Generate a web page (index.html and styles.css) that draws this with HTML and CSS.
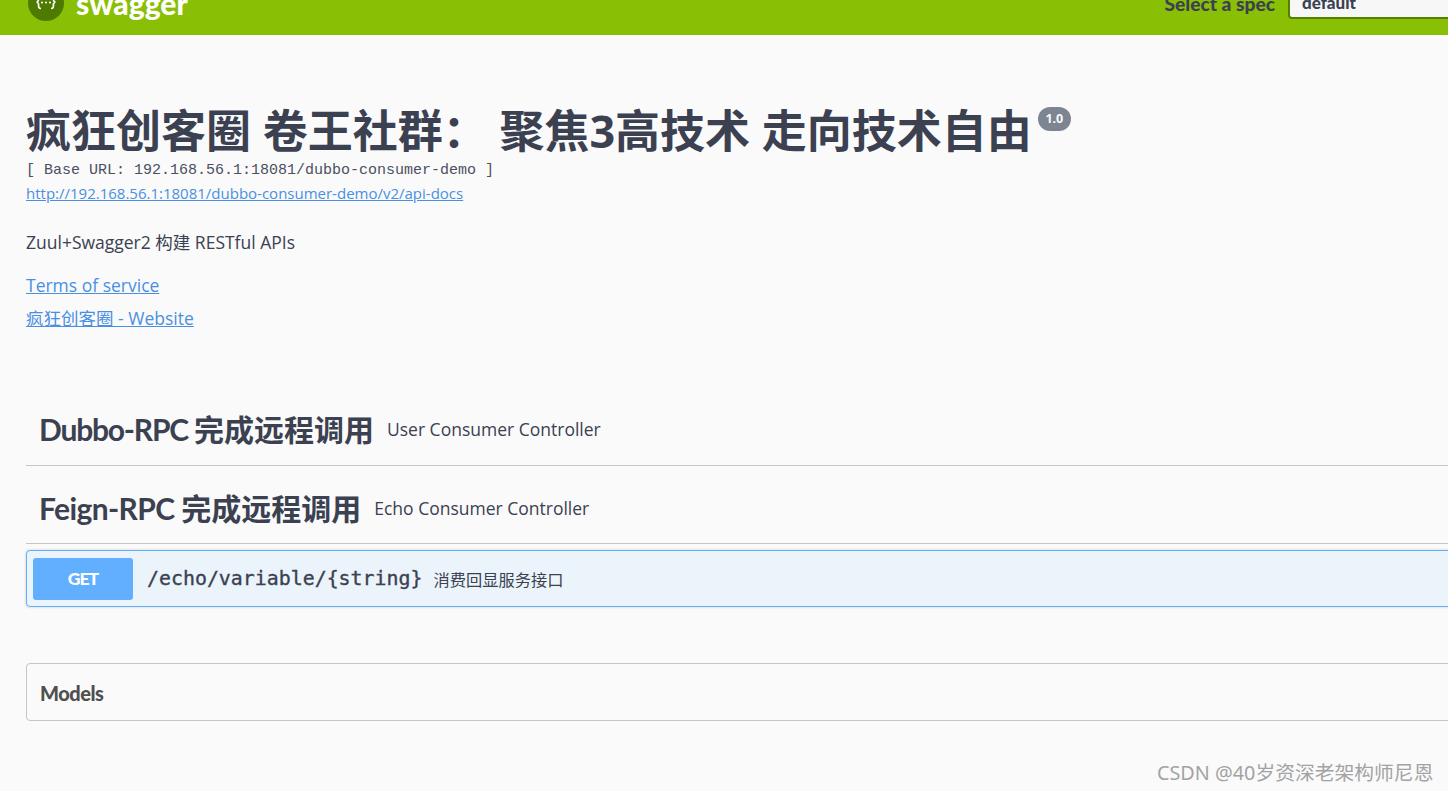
FILE: index.html
```html
<!DOCTYPE html>
<html lang="zh-CN">
<head>
<meta charset="utf-8">
<title>Swagger UI</title>
<link rel="stylesheet" href="styles.css">
</head>
<body>
<div class="page">
  <header class="topbar">
    <div class="brand">
      <svg class="logo" width="36" height="36" viewBox="0 0 36 36" aria-hidden="true">
        <circle cx="18" cy="18" r="18" fill="#4f7a02"/>
        <path d="M13 10.5c-2.6 0-2.4 1.6-2.4 3.4 0 1.7-.5 2.9-2 3.1 1.5.2 2 1.4 2 3.1 0 1.8-.2 3.4 2.4 3.4M23 10.5c2.6 0 2.4 1.6 2.4 3.4 0 1.7.5 2.9 2 3.1-1.5.2-2 1.4-2 3.1 0 1.8.2 3.4-2.4 3.4" fill="none" stroke="#fff" stroke-width="1.7"/>
        <circle cx="14" cy="17.5" r="1.1" fill="#fff"/>
        <circle cx="18" cy="17.5" r="1.1" fill="#fff"/>
        <circle cx="22" cy="17.5" r="1.1" fill="#fff"/>
      </svg>
      <span class="brand-name">swagger</span>
    </div>
    <div class="spec">
      <span class="spec-label">Select a spec</span>
      <div class="spec-select">default</div>
    </div>
  </header>

  <main class="content">
    <section class="info">
      <h1 class="title">疯狂创客圈 卷王社群： 聚焦3高技术 走向技术自由<span class="version">1.0</span></h1>
      <div class="base-url">[ Base URL: 192.168.56.1:18081/dubbo-consumer-demo ]</div>
      <a class="doc-link" href="#">http://192.168.56.1:18081/dubbo-consumer-demo/v2/api-docs</a>
      <p class="desc">Zuul+Swagger2 构建 RESTful APIs</p>
      <a class="info-link terms" href="#">Terms of service</a>
      <a class="info-link" href="#">疯狂创客圈 - Website</a>
    </section>

    <section class="tag first">
      <h2 class="tag-name"><span class="latin-wide">Dubbo-RPC </span>完成远程调用</h2>
      <span class="tag-desc">User Consumer Controller</span>
    </section>
    <section class="tag">
      <h2 class="tag-name"><span class="latin-narrow">Feign-RPC </span>完成远程调用</h2>
      <span class="tag-desc">Echo Consumer Controller</span>
    </section>

    <div class="op">
      <span class="method">GET</span>
      <span class="path">/echo/variable/{string}</span>
      <span class="summary">消费回显服务接口</span>
    </div>

    <section class="models">Models</section>
  </main>
  <div class="watermark">CSDN @40岁资深老架构师尼恩</div>
</div>
</body>
</html>
```

FILE: styles.css
```css
* { box-sizing: border-box; }
html, body { margin: 0; height: 100%; overflow: hidden; background: #fafafa; }
body { font-family: "Open Sans", "Noto Sans CJK SC", sans-serif; color: #3b4151; }
.page { width: 1500px; height: 791px; position: relative; }

.topbar {
  height: 35px; background: #89bf04; overflow: hidden;
  display: flex; align-items: flex-end; justify-content: space-between;
  padding: 0 0 0 28px;
}
.brand { display: flex; align-items: center; gap: 12px; margin-bottom: 14px; height: 36px; }
.logo { flex: none; }
.brand-name { font-family: "Lato", "Noto Sans", sans-serif; font-weight: 900; font-size: 30px; line-height: 36px; color: #fff; }
.spec { display: flex; align-items: center; gap: 13px; margin-bottom: 16px; }
.spec-label { font-family: "Lato", sans-serif; font-weight: 900; font-size: 19.2px; line-height: 24px; margin-top: 6px; color: #3b4151; }
.spec-select {
  width: 212px; height: 36px; background: #f7f7f7; border: 2px solid #547f00; border-radius: 4px;
  padding: 0 0 4px 12px; font-family: "Lato", sans-serif; font-weight: 900; font-size: 17px;
  color: #3b4151; display: flex; align-items: flex-end; line-height: 20px;
}

.content { padding: 0 26px; }
.info { padding-top: 68px; }
.title { margin: 0; font-size: 45px; line-height: 56px; font-weight: 700; font-family: "Open Sans", "Noto Sans CJK SC", sans-serif; display: flex; align-items: flex-start; }
.version {
  font-size: 12.5px; line-height: 18px; height: 24px; width: 33px; padding-top: 3px; margin: 4px 0 0 6px; text-align: center;
  border-radius: 12px; background: #7d8492; color: #fafafa; font-weight: 700; font-family: "Noto Sans", sans-serif;
}
.base-url { font-family: "Liberation Mono", monospace; font-size: 15px; line-height: 18px; margin-top: 3px; color: #4b5060; }
.doc-link { display: block; margin-top: 3px; font-size: 15px; line-height: 20px; color: #4990e2; }
.desc { margin: 26px 0 0; font-size: 17.5px; line-height: 26px; }
.info-link { display: block; margin-top: 9px; font-size: 17.5px; line-height: 24px; color: #4990e2; }
.terms { margin-top: 18px; }

.tag { display: flex; align-items: center; padding: 6px 13px 0; border-bottom: 1px solid #c5c6c9; height: 78px; gap: 13px; }
.tag.first { margin-top: 57px; height: 79px; }
.tag-name { margin: 0; font-family: "Lato", "Noto Sans CJK SC", sans-serif; font-size: 30px; line-height: 40px; font-weight: 700; }
.latin-wide { letter-spacing: -1.2px; }
.latin-narrow { letter-spacing: -.6px; }
.tag-desc { font-size: 17.5px; }

.op {
  margin-top: 6px; height: 57px; display: flex; align-items: center; padding: 0 6px;
  border: 1px solid #61affe; border-radius: 4px; background: #ebf3fb;
  box-shadow: 0 0 3px rgba(0,0,0,.19);
}
.method {
  width: 100px; height: 42px; flex: none; display: flex; align-items: center; justify-content: center;
  background: #61affe; border-radius: 3px; color: #fff; font-family: "Lato", sans-serif; font-weight: 900; font-size: 17.5px; letter-spacing: -1px;
}
.path { margin-left: 14px; font-family: "DejaVu Sans Mono", monospace; font-size: 19.9px; font-weight: 400; color: #3b4151; -webkit-text-stroke: .35px #3b4151; }
.summary { margin-left: 11px; font-size: 16.25px; color: #3b4151; }

.models {
  margin-top: 56px; height: 58px; display: flex; align-items: center; padding: 1px 13px 0;
  border: 1px solid #c5c6c9; border-radius: 4px;
  font-family: "Lato", sans-serif; font-weight: 900; font-size: 20px; letter-spacing: -.5px; color: #505050;
}

.watermark { position: absolute; left: 1157px; top: 760px; font-size: 19.8px; line-height: 25px; color: #a3a3a3; font-family: "Noto Sans", "Noto Sans CJK SC", sans-serif; white-space: nowrap; }
```
